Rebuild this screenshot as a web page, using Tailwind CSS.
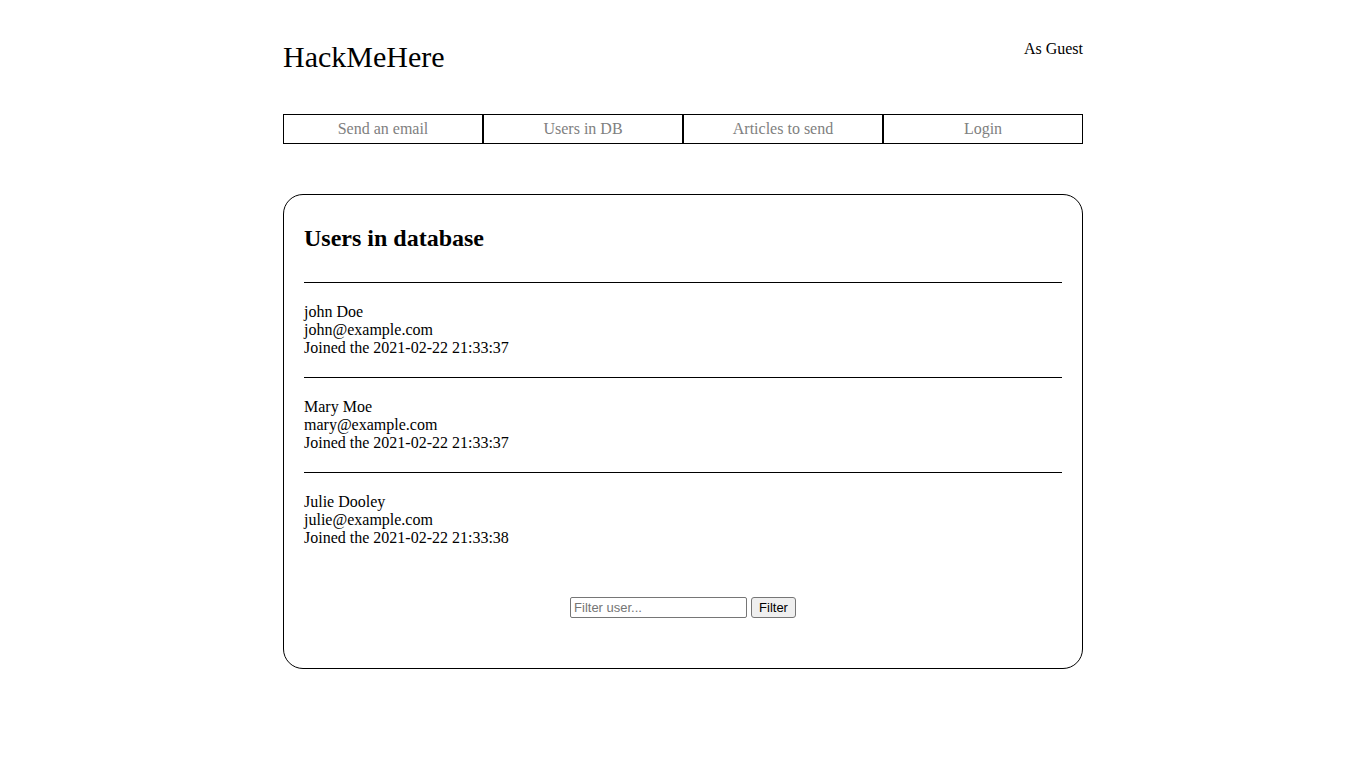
<!DOCTYPE html>
<html lang="en">
<head>
<meta charset="utf-8">
<meta name="viewport" content="width=device-width, initial-scale=1">
<title>HackMeHere</title>
<script src="https://cdn.jsdelivr.net/npm/@tailwindcss/browser@4"></script>
</head>
<body class="bg-white font-['Liberation_Serif',serif] text-base leading-[18px] text-black">
<div class="mx-auto max-w-[800px] py-10">
  <header class="flex items-start justify-between">
    <h1 class="text-[30px] leading-[34px]">HackMeHere</h1>
    <p>As Guest</p>
  </header>
  <nav class="mt-10 grid grid-cols-4 text-center text-[#808080]">
    <a href="#" class="border border-black p-[5px]">Send an email</a>
    <a href="#" class="border border-black p-[5px]">Users in DB</a>
    <a href="#" class="border border-black p-[5px]">Articles to send</a>
    <a href="#" class="border border-black p-[5px]">Login</a>
  </nav>
  <main class="mt-[50px] rounded-[20px] border border-black px-5 pb-[50px]">
    <h2 class="py-[30px] text-2xl leading-[27px] font-bold">Users in database</h2>
    <ul>
      <li class="border-t border-black py-5">
        <p>john Doe</p>
        <p>john@example.com</p>
        <p>Joined the 2021-02-22 21:33:37</p>
      </li>
      <li class="border-t border-black py-5">
        <p>Mary Moe</p>
        <p>mary@example.com</p>
        <p>Joined the 2021-02-22 21:33:37</p>
      </li>
      <li class="border-t border-black py-5">
        <p>Julie Dooley</p>
        <p>julie@example.com</p>
        <p>Joined the 2021-02-22 21:33:38</p>
      </li>
    </ul>
    <form class="mt-[30px] flex justify-center gap-1 font-['Liberation_Sans',sans-serif] text-[13px] leading-[15px]">
      <input type="text" aria-label="Filter user" placeholder="Filter user..." class="h-[21px] w-[177px] rounded-[2px] border border-[#767676] px-[3px] placeholder:text-[#757575]">
      <button type="submit" class="h-[21px] rounded-[3px] border border-[#767676] bg-[#efefef] px-[7px]">Filter</button>
    </form>
  </main>
</div>
</body>
</html>
